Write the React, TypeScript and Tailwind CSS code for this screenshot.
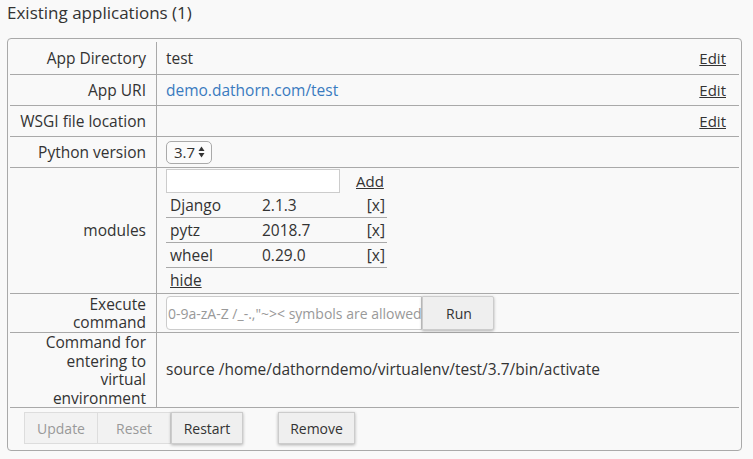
import React from "react";

const rowCls = "flex border-b border-[#a9a9a9]";
const labelCls = "w-[147px] shrink-0 border-r border-[#a9a9a9] flex items-center justify-end pr-[10px] text-right";

function SelectArrows() {
  return (
    <svg width="7" height="12" viewBox="0 0 7 12" className="ml-[3px]">
      <path d="M3.5 0.5 L6.5 5 L0.5 5 Z" fill="#333" />
      <path d="M3.5 11.5 L6.5 7 L0.5 7 Z" fill="#333" />
    </svg>
  );
}

export default function App() {
  const modules = [
    ["Django", "2.1.3"],
    ["pytz", "2018.7"],
    ["wheel", "0.29.0"],
  ];
  return (
    <div
      className="w-[753px] h-[459px] bg-[#f9f9f9] text-[#333] text-[15.5px] overflow-hidden"
      style={{ fontFamily: '"Open Sans", "Liberation Sans", sans-serif' }}
    >
      <div className="pl-[7px] pt-[2px] text-[17px] leading-[22px] text-[#333]">Existing applications (1)</div>
      <div className="ml-[7px] mr-[11px] mt-[14px] h-[413px] border border-[#a9a9a9] rounded-[4px] px-[2px] pt-[3px]">
        <div className={rowCls + " h-[33px]"}>
          <div className={labelCls + " pt-[1px]"}>App Directory</div>
          <div className="flex-1 flex items-center pl-[9px] pt-[1px]">test</div>
          <div className="flex items-center pr-[13px] underline text-[15px]">Edit</div>
        </div>
        <div className={rowCls + " h-[31px]"}>
          <div className={labelCls + " pt-[1px]"}>App URI</div>
          <div className="flex-1 flex items-center pl-[9px] pt-[1px] text-[#3a7bbf]">demo.dathorn.com/test</div>
          <div className="flex items-center pr-[13px] underline text-[15px]">Edit</div>
        </div>
        <div className={rowCls + " h-[31px]"}>
          <div className={labelCls + " pt-[1px]"}>WSGI file location</div>
          <div className="flex-1 flex items-center pl-[9px]"></div>
          <div className="flex items-center pr-[13px] underline text-[15px]">Edit</div>
        </div>
        <div className={rowCls + " h-[31px]"}>
          <div className={labelCls + " pt-[1px]"}>Python version</div>
          <div className="flex-1 flex items-center pl-[9px]">
            <div className="h-[23px] w-[46px] border border-[#aaa] rounded-[5px] bg-[#fbfbfb] flex items-center pl-[7px] text-[15px]">
              <span>3.7</span>
              <SelectArrows />
            </div>
          </div>
        </div>
        <div className={rowCls + " h-[126px]"}>
          <div className={labelCls}>modules</div>
          <div className="flex-1 pl-[9px] pt-[1px]">
            <div className="flex items-center h-[24px]">
              <div className="w-[174px] h-[24px] border border-[#ccc] bg-white"></div>
              <span className="ml-[16px] underline text-[15px]">Add</span>
            </div>
            <div className="w-[221px]">
              {modules.map(([n, v]) => (
                <div key={n} className="flex items-center h-[25px] border-b border-[#a9a9a9] pl-[4px] pr-[2px] pt-[1px]">
                  <span className="w-[92px]">{n}</span>
                  <span className="flex-1">{v}</span>
                  <span>[x]</span>
                </div>
              ))}
            </div>
            <div className="h-[25px] flex items-center pl-[4px]">
              <span className="underline">hide</span>
            </div>
          </div>
        </div>
        <div className={rowCls + " h-[39px]"}>
          <div className={labelCls + " leading-[18.5px]"}>Execute<br />command</div>
          <div className="flex-1 flex items-center pl-[9px]">
            <div className="w-[256px] h-[34px] border border-[#ccc] rounded-l-[4px] bg-white flex items-center pl-[1px] text-[#999] text-[14px] whitespace-nowrap overflow-hidden">
              0-9a-zA-Z /_-.,"~&gt;&lt; symbols are allowed
            </div>
            <button className="w-[72px] h-[34px] border border-[#ccc] bg-[#efefef] shadow-[0_1px_3px_rgba(0,0,0,0.3)] rounded-r-[2px] text-[14px] pl-[2px]">Run</button>
          </div>
        </div>
        <div className={rowCls + " h-[75px]"}>
          <div className={labelCls + " leading-[18.5px]"}>
            Command for<br />entering to<br />virtual<br />environment
          </div>
          <div className="flex-1 flex items-center pl-[9px]">source /home/dathorndemo/virtualenv/test/3.7/bin/activate</div>
        </div>
        <div className="flex items-center pl-[14px] pt-[4px] text-[14px]">
          <button className="w-[74px] h-[32px] border border-[#ddd] bg-[#f2f2f2] text-[#999]">Update</button>
          <button className="w-[73px] h-[32px] border border-[#ddd] border-l-0 bg-[#f2f2f2] text-[#999]">Reset</button>
          <button className="w-[72px] h-[32px] border border-[#ccc] bg-[#efefef] shadow-[0_1px_3px_rgba(0,0,0,0.3)]">Restart</button>
          <button className="ml-[35px] w-[77px] h-[32px] border border-[#ccc] bg-[#efefef] shadow-[0_1px_3px_rgba(0,0,0,0.3)]">Remove</button>
        </div>
      </div>
    </div>
  );
}
